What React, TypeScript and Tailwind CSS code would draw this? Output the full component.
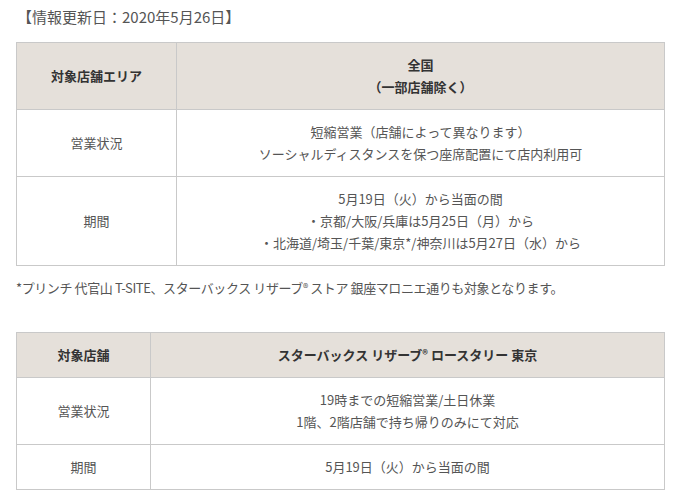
import React from 'react';

const font = { fontFamily: '"Noto Sans CJK JP", "Noto Sans", sans-serif' };

const th = 'border border-[#c9c9c9] bg-[#e5e0da] py-[11px] px-3 text-center font-bold text-[#333]';
const td = 'border border-[#c9c9c9] bg-white py-[11px] px-3 text-center text-[#555]';

function Reg() {
  return <sup className="text-[11px] relative -top-[1px]">®</sup>;
}

export default function App() {
  return (
    <div className="min-h-screen bg-white px-4 pt-[6px] text-[13px] leading-[22px]" style={font}>
      <p className="text-[15px] text-[#555] pl-[1px]">【情報更新日：2020年5月26日】</p>

      <table className="mt-[14px] w-[649px] border-collapse table-fixed">
        <colgroup>
          <col className="w-[160px]" />
          <col />
        </colgroup>
        <tbody>
          <tr>
            <td className={th}>対象店舗エリア</td>
            <td className={th}>
              全国
              <br />
              （一部店舗除く）
            </td>
          </tr>
          <tr>
            <td className={td}>営業状況</td>
            <td className={td}>
              短縮営業（店舗によって異なります）
              <br />
              ソーシャルディスタンスを保つ座席配置にて店内利用可
            </td>
          </tr>
          <tr>
            <td className={td}>期間</td>
            <td className={td}>
              5月19日（火）から当面の間
              <br />
              ・京都/大阪/兵庫は5月25日（月）から
              <br />
              ・北海道/埼玉/千葉/東京*/神奈川は5月27日（水）から
            </td>
          </tr>
        </tbody>
      </table>

      <p className="mt-[11px] text-[#555] tracking-[-0.4px]">
        *プリンチ 代官山 T-SITE、スターバックス リザーブ<Reg /> ストア 銀座マロニエ通りも対象となります。
      </p>

      <table className="mt-[33px] w-[649px] border-collapse table-fixed">
        <colgroup>
          <col className="w-[134px]" />
          <col />
        </colgroup>
        <tbody>
          <tr>
            <td className={th}>対象店舗</td>
            <td className={th}>
              スターバックス リザーブ<Reg /> ロースタリー 東京
            </td>
          </tr>
          <tr>
            <td className={td}>営業状況</td>
            <td className={td}>
              19時までの短縮営業/土日休業
              <br />
              1階、2階店舗で持ち帰りのみにて対応
            </td>
          </tr>
          <tr>
            <td className={td}>期間</td>
            <td className={td}>5月19日（火）から当面の間</td>
          </tr>
        </tbody>
      </table>
    </div>
  );
}
